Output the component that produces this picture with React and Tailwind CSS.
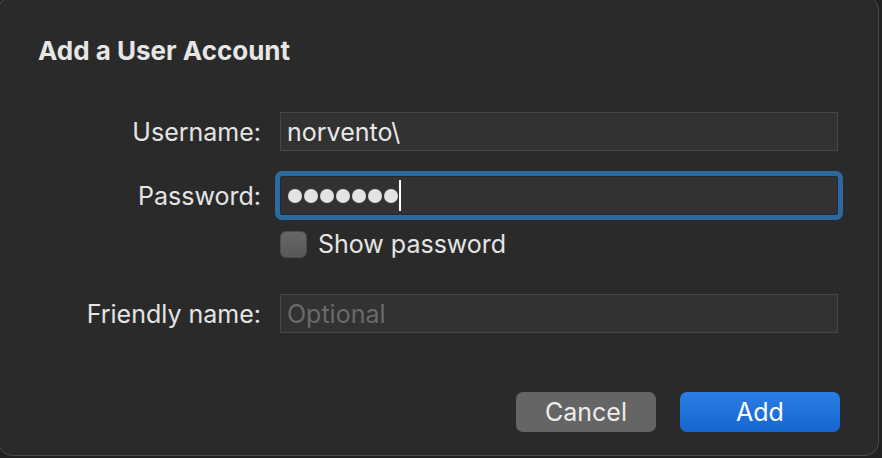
import React from 'react';

const font = { fontFamily: 'Inter, "Noto Sans", sans-serif' };

function Field({ children, focused }) {
  return (
    <div className="relative w-[558px]">
      {focused && (
        <div className="pointer-events-none absolute -inset-[5px] rounded-[7px] border-[5px] border-[#2a6a9f]" />
      )}
      <div
        className={
          focused
            ? 'flex h-[39px] w-[558px] items-center border border-[#1f2a33] bg-[#323232] px-[6px]'
            : 'flex h-[39px] w-[558px] items-center border border-[#474747] bg-[#323232] px-[6px]'
        }
      >
        {children}
      </div>
    </div>
  );
}

export default function App() {
  return (
    <div className="h-[458px] w-[882px] overflow-hidden bg-[#222222]" style={font}>
      <div className="-ml-[2px] -mt-[4px] flex h-[460px] w-[881px] flex-col rounded-[14px] border border-[#4a4a4a] bg-[#2a2a2a] text-[#e4e4e4]">
        <h1 className="ml-[39px] mt-[38px] text-[26px] font-bold leading-[32px] text-[#e6e6e6]">Add a User Account</h1>

        <div className="mt-[45px] grid grid-cols-[262px_auto] items-center gap-x-[19px]">
          <label className="text-right text-[25px] leading-[30px]">Username:</label>
          <Field>
            <span className="text-[25px] leading-[30px] text-[#e8e8e8]">norvento\</span>
          </Field>

          <label className="mt-[25px] text-right text-[25px] leading-[30px]">Password:</label>
          <div className="mt-[25px]">
            <Field focused>
              <div className="flex items-center gap-[2px] pl-[1px]">
                {Array.from({ length: 7 }).map((_, i) => (
                  <span key={i} className="h-[14px] w-[14px] rounded-full bg-[#e2e2e2]" />
                ))}
              </div>
              <span className="ml-[1px] h-[31px] w-[2px] bg-white" />
            </Field>
          </div>

          <div />
          <div className="mt-[14px] flex items-center gap-[11px]">
            <span className="h-[27px] w-[27px] rounded-[6px] border border-[#4c4c4c] bg-gradient-to-b from-[#676767] to-[#585858]" />
            <span className="text-[25px] leading-[30px]">Show password</span>
          </div>

          <label className="mt-[35px] text-right text-[25px] leading-[30px]">Friendly name:</label>
          <div className="mt-[35px]">
            <Field>
              <span className="text-[25px] leading-[30px] text-[#6a6a6a]">Optional</span>
            </Field>
          </div>
        </div>

        <div className="mr-[38px] mt-[59px] flex justify-end gap-[24px]">
          <button className="h-[40px] w-[140px] rounded-[7px] bg-[#656565] text-[25px] leading-[30px] text-[#ececec]">
            Cancel
          </button>
          <button className="h-[40px] w-[160px] rounded-[7px] bg-gradient-to-b from-[#2a7de2] to-[#1766d2] text-[25px] leading-[30px] text-white">
            Add
          </button>
        </div>
      </div>
    </div>
  );
}
